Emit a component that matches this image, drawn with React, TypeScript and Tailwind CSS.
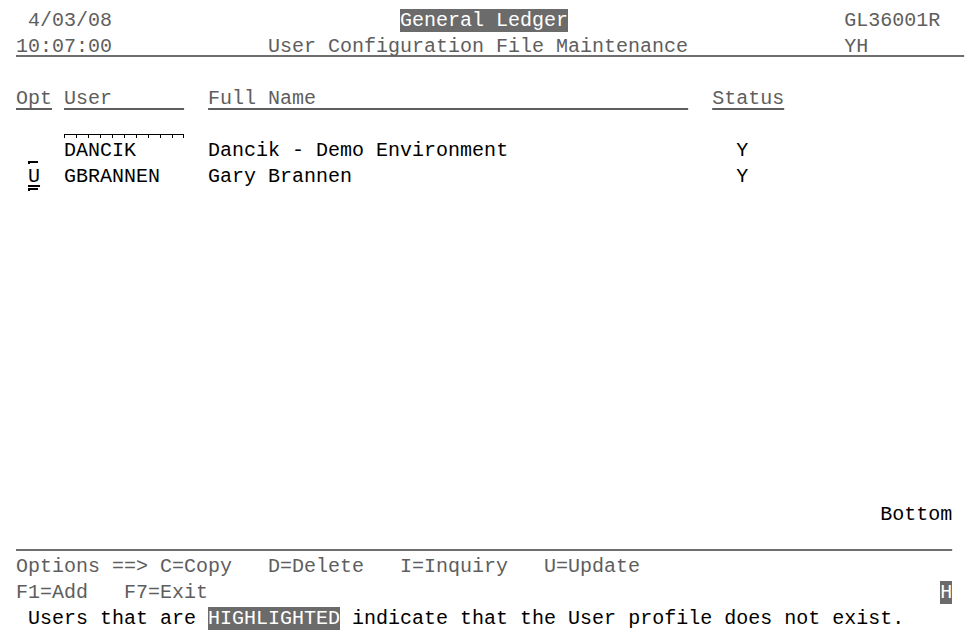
import React from "react";

// 5250-style display: 80 columns x 24 rows, 12px cells, 26px rows
const GRAY = "text-[#5e5e5e]";
const INK = "text-black";
const LINE = "underline decoration-2 [text-decoration-skip-ink:none]";

function Row({ children, className = "" }: { children?: React.ReactNode; className?: string }) {
  return <div className={`h-[26px] leading-[26px] whitespace-pre ${className}`}>{children}</div>;
}

function Rev({ children }: { children: React.ReactNode }) {
  return <span className="bg-[#6b6b6b] text-white">{children}</span>;
}

// Column separator ruler drawn over an input field
function Ruler({ cells }: { cells: number }) {
  return (
    <div className="flex">
      {Array.from({ length: cells }).map((_, i) => (
        <div
          key={i}
          className={`h-[4px] w-[12px] border-t border-l border-black ${i === cells - 1 ? "border-r" : ""}`}
        />
      ))}
    </div>
  );
}

function OptField({ value }: { value: string }) {
  return (
    <span className="relative inline-block w-[12px]">
      <span className="absolute left-0 top-[-3px] h-[3px] w-[10px] border-t-2 border-l-2 border-black" />
      <span className={`${LINE} underline-offset-[3px]`}>{value}</span>
      <span className="absolute left-0 bottom-[-1px] h-[3px] w-[10px] border-t-2 border-l-2 border-black" />
    </span>
  );
}

export default function App() {
  const users = [
    { opt: "", id: "DANCIK", name: "Dancik - Demo Environment", status: "Y" },
    { opt: "U", id: "GBRANNEN", name: "Gary Brannen", status: "Y" },
  ];

  return (
    <div className="h-[636px] w-[969px] bg-white pl-[4px] pt-[8px] font-['Liberation_Mono',monospace] text-[20px]">
      <Row className={GRAY}>
        {"  4/03/08" + " ".repeat(24)}
        <Rev>General Ledger</Rev>
        {" ".repeat(23) + "GL36001R"}
      </Row>
      <Row className={GRAY}>
        {" "}
        <span className={`${LINE} decoration-[#6e6e6e] underline-offset-[3px]`}>
          {"10:07:00" + " ".repeat(13) + "User Configuration File Maintenance" + " ".repeat(13) + "YH" + " ".repeat(8)}
        </span>
      </Row>
      <Row />
      <Row className={GRAY}>
        {" "}
        <span className={`${LINE} underline-offset-[4px]`}>Opt</span>
        {" "}
        <span className={`${LINE} underline-offset-[4px]`}>{"User      "}</span>
        {"  "}
        <span className={`${LINE} underline-offset-[4px]`}>{"Full Name".padEnd(40, " ")}</span>
        {"  "}
        <span className={`${LINE} underline-offset-[4px]`}>Status</span>
      </Row>
      <Row className="flex items-end pl-[60px]">
        <Ruler cells={10} />
      </Row>
      {users.map((u) => (
        <Row key={u.id} className={INK}>
          {"  "}
          {u.opt ? <OptField value={u.opt} /> : " "}
          {"  "}
          {u.id.padEnd(12, " ")}
          {u.name.padEnd(44, " ")}
          {u.status}
        </Row>
      ))}
      {Array.from({ length: 12 }).map((_, i) => (
        <Row key={i} />
      ))}
      <Row className={INK}>{" ".repeat(73)}Bottom</Row>
      <Row>
        {" "}
        <span className={`${LINE} decoration-[#6e6e6e] underline-offset-[3px]`}>{" ".repeat(78)}</span>
      </Row>
      <Row className={GRAY}>{" Options ==> C=Copy   D=Delete   I=Inquiry   U=Update"}</Row>
      <Row className={GRAY}>
        {" F1=Add   F7=Exit" + " ".repeat(61)}
        <Rev>H</Rev>
      </Row>
      <Row className={INK}>
        {"  Users that are "}
        <Rev>HIGHLIGHTED</Rev>
        {" indicate that the User profile does not exist."}
      </Row>
    </div>
  );
}
